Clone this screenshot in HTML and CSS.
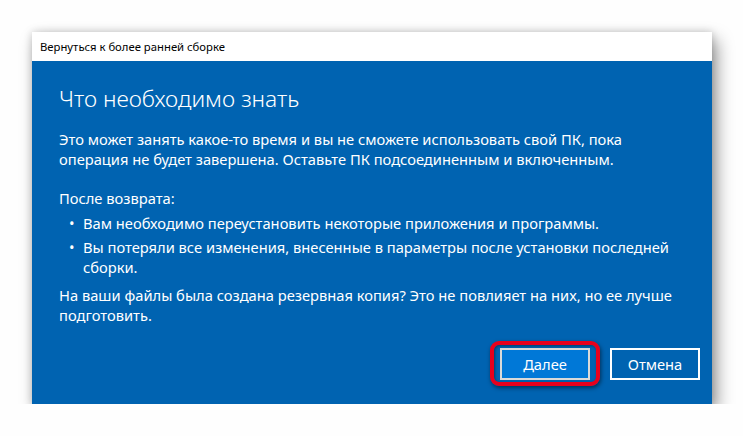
FILE: index.html
```html
<!DOCTYPE html>
<html lang="ru">
<head>
<meta charset="utf-8">
<link rel="stylesheet" href="styles.css">
</head>
<body>
<div class="dialog">
  <div class="titlebar">Вернуться к более ранней сборке</div>
  <div class="panel">
    <h1 class="heading">Что необходимо знать</h1>
    <p class="para">Это может занять какое-то время и вы не сможете использовать свой ПК, пока операция не будет завершена. Оставьте ПК подсоединенным и включенным.</p>
    <p class="para after">После возврата:</p>
    <ul class="list">
      <li>Вам необходимо переустановить некоторые приложения и программы.</li>
      <li>Вы потеряли все изменения, внесенные в параметры после установки последней сборки.</li>
    </ul>
    <p class="para note">На ваши файлы была создана резервная копия? Это не повлияет на них, но ее лучше подготовить.</p>
    <div class="buttons">
      <div class="btn-wrap">
        <button class="btn primary">Далее</button>
        <span class="highlight"></span>
      </div>
      <button class="btn">Отмена</button>
    </div>
  </div>
</div>
</body>
</html>
```
FILE: styles.css
```css
html, body {
  margin: 0;
  padding: 0;
  background: #fefefe;
}
body {
  font-family: "Noto Sans", "Open Sans", sans-serif;
  padding: 32px 0 0 32px;
}
.dialog {
  width: 680px;
  height: 372px;
  display: flex;
  flex-direction: column;
  box-shadow: 5px 8px 16px rgba(0,0,0,0.4), 0 0 8px rgba(0,0,0,0.18);
}
.titlebar {
  height: 29px;
  background: #fff;
  color: #000;
  font-size: 11.3px;
  line-height: 29px;
  padding-left: 8px;
}
.panel {
  flex: 1;
  background: #0063b1;
  color: #fff;
  padding: 0 12px 24px 27px;
  display: flex;
  flex-direction: column;
  position: relative;
}
.heading {
  margin: 22px 0 0 0;
  font-weight: 300;
  font-size: 22.8px;
  line-height: 32px;
  height: 32px;
}
.para {
  margin: 0;
  font-size: 14.7px;
  line-height: 19.5px;
  padding-right: 29px;
}
.para.note {
  padding-right: 0;
}
.heading + .para {
  margin-top: 15px;
}
.after {
  margin-top: 20px;
}
.list {
  list-style: none;
  margin: 5px 0 4px 0;
  padding: 0;
  font-size: 14.7px;
  line-height: 19.5px;
}
.list li {
  position: relative;
  padding-left: 24px;
  padding-right: 29px;
  margin-bottom: 5px;
}
.list li::before {
  content: "•";
  position: absolute;
  left: 10px;
}
.buttons {
  margin-top: auto;
  display: flex;
  justify-content: flex-end;
  gap: 20px;
}
.btn-wrap {
  position: relative;
  display: flex;
}
.btn {
  width: 90px;
  height: 32px;
  box-sizing: border-box;
  border: 2px solid #fff;
  background: transparent;
  color: #fff;
  font-family: inherit;
  font-size: 14.7px;
  padding: 0;
}
.btn.primary {
  background: #0078d7;
  border-color: #d9d9d9;
}
.highlight {
  position: absolute;
  left: -10px;
  top: -7px;
  right: -10px;
  bottom: -6px;
  border: 4px solid #e8001c;
  border-radius: 9px;
  box-shadow: 1px 2px 4px rgba(0,0,0,0.5), inset 1px 1px 3px rgba(0,0,0,0.4);
}
```
